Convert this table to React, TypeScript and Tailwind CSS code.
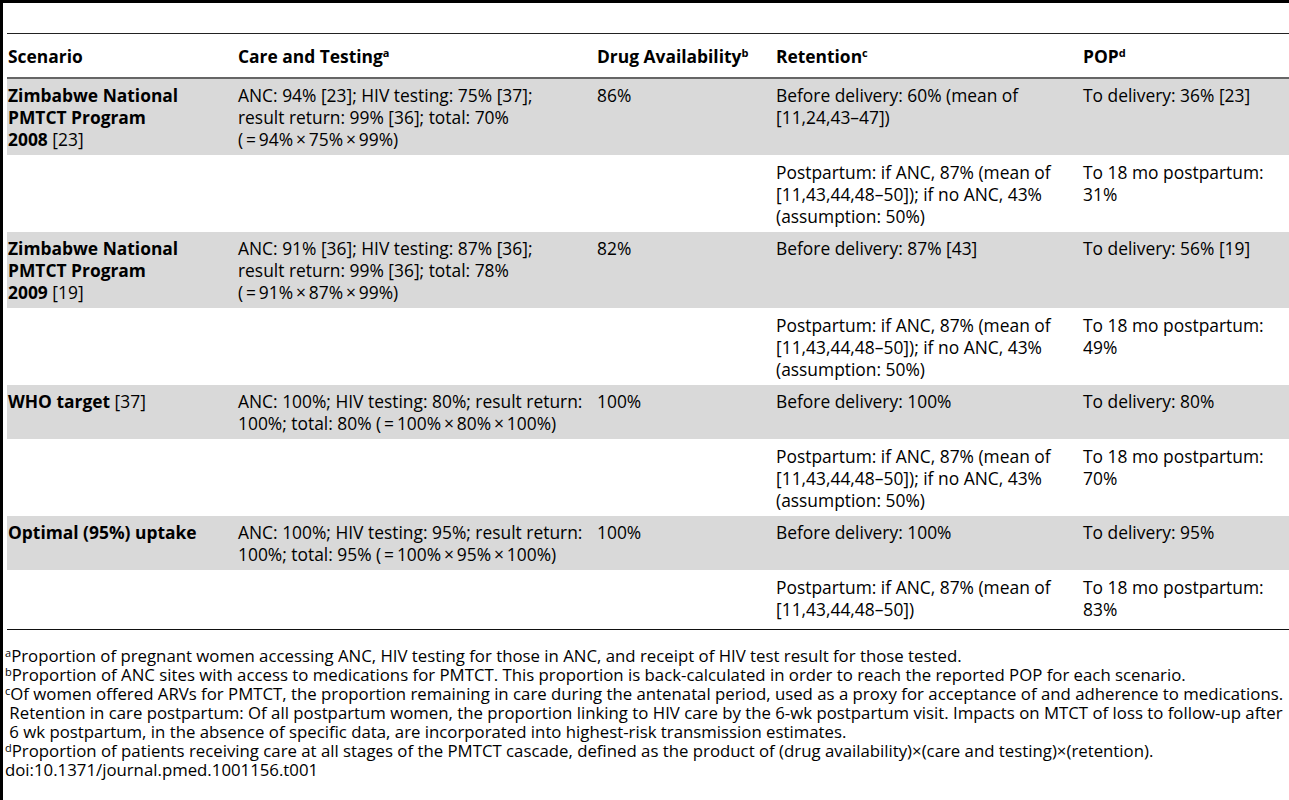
import React from "react";

type Row = {
  scenario?: React.ReactNode;
  care?: React.ReactNode;
  drug?: string;
  retention: React.ReactNode;
  pop: React.ReactNode;
  grey: boolean;
  tall?: boolean;
};

const t = "\u2009";
const mult = (a: string, b: string, c: string) => `(${t}=${t}${a}${t}×${t}${b}${t}×${t}${c})`;

const postpartum = (
  <>
    Postpartum: if ANC, 87% (mean of
    <br />
    [11,43,44,48–50]); if no ANC, 43%
    <br />
    (assumption: 50%)
  </>
);

const rows: Row[] = [
  {
    scenario: (
      <>
        <b>Zimbabwe National</b>
        <br />
        <b>PMTCT Program</b>
        <br />
        <b>2008</b> [23]
      </>
    ),
    care: (
      <>
        ANC: 94% [23]; HIV testing: 75% [37];
        <br />
        result return: 99% [36]; total: 70%
        <br />
        {mult("94%", "75%", "99%")}
      </>
    ),
    drug: "86%",
    retention: (
      <>
        Before delivery: 60% (mean of
        <br />
        [11,24,43–47])
      </>
    ),
    pop: "To delivery: 36% [23]",
    grey: true,
  },
  {
    retention: postpartum,
    pop: (
      <>
        To 18 mo postpartum:
        <br />
        31%
      </>
    ),
    grey: false,
  },
  {
    scenario: (
      <>
        <b>Zimbabwe National</b>
        <br />
        <b>PMTCT Program</b>
        <br />
        <b>2009</b> [19]
      </>
    ),
    care: (
      <>
        ANC: 91% [36]; HIV testing: 87% [36];
        <br />
        result return: 99% [36]; total: 78%
        <br />
        {mult("91%", "87%", "99%")}
      </>
    ),
    drug: "82%",
    retention: "Before delivery: 87% [43]",
    pop: "To delivery: 56% [19]",
    grey: true,
  },
  {
    retention: postpartum,
    pop: (
      <>
        To 18 mo postpartum:
        <br />
        49%
      </>
    ),
    grey: false,
  },
  {
    scenario: (
      <>
        <b>WHO target</b> [37]
      </>
    ),
    care: (
      <>
        ANC: 100%; HIV testing: 80%; result return:
        <br />
        100%; total: 80% {mult("100%", "80%", "100%")}
      </>
    ),
    drug: "100%",
    retention: "Before delivery: 100%",
    pop: "To delivery: 80%",
    grey: true,
  },
  {
    retention: postpartum,
    pop: (
      <>
        To 18 mo postpartum:
        <br />
        70%
      </>
    ),
    grey: false,
  },
  {
    scenario: <b>Optimal (95%) uptake</b>,
    care: (
      <>
        ANC: 100%; HIV testing: 95%; result return:
        <br />
        100%; total: 95% {mult("100%", "95%", "100%")}
      </>
    ),
    drug: "100%",
    retention: "Before delivery: 100%",
    pop: "To delivery: 95%",
    grey: true,
  },
  {
    retention: (
      <>
        Postpartum: if ANC, 87% (mean of
        <br />
        [11,43,44,48–50])
      </>
    ),
    pop: (
      <>
        To 18 mo postpartum:
        <br />
        83%
      </>
    ),
    grey: false,
    tall: true,
  },
];

const Sup = ({ children }: { children: string }) => <sup className="text-[11px] font-normal">{children}</sup>;
const HSup = ({ children }: { children: string }) => <sup className="text-[11px] font-bold">{children}</sup>;

const App = () => {
  return (
    <div className="w-[1289px] h-[800px] overflow-hidden bg-white border-l-[3px] border-t-[3px] border-black font-['Open_Sans',sans-serif] text-[17.4px] text-black">
      <div className="pl-[4px] pt-[30px]">
        <div className="border-t border-[#222]">
          <table className="w-full border-collapse table-fixed leading-[22px] whitespace-nowrap">
            <colgroup>
              <col className="w-[231px]" />
              <col className="w-[359px]" />
              <col className="w-[179px]" />
              <col className="w-[307px]" />
              <col />
            </colgroup>
            <thead>
              <tr className="h-[44px] border-b-2 border-[#666] text-left">
                <th className="pl-[1px] pt-[1px] font-bold">Scenario</th>
                <th className="font-bold">
                  Care and Testing<HSup>a</HSup>
                </th>
                <th className="font-bold">
                  Drug Availability<HSup>b</HSup>
                </th>
                <th className="font-bold">
                  Retention<HSup>c</HSup>
                </th>
                <th className="font-bold">
                  POP<HSup>d</HSup>
                </th>
              </tr>
            </thead>
            <tbody>
              {rows.map((r, i) => (
                <tr key={i} className={r.grey ? "bg-[#d9d9d9] border-b border-white" : "bg-white"}>
                  <td className="align-top pl-[1px] pt-[5px] pb-[5px]">{r.scenario}</td>
                  <td className="align-top pt-[5px] pb-[5px]">{r.care}</td>
                  <td className="align-top pt-[5px] pb-[5px]">{r.drug}</td>
                  <td className="align-top pt-[5px] pb-[5px]">{r.retention}</td>
                  <td className={`align-top pt-[5px] ${r.tall ? "pb-[9px]" : "pb-[5px]"}`}>{r.pop}</td>
                </tr>
              ))}
            </tbody>
          </table>
          <div className="border-t border-[#111]" />
        </div>
      </div>
      <div className="pl-[2px] pt-[16px] text-[16.8px] leading-[19px] whitespace-nowrap">
        <div>
          <Sup>a</Sup>Proportion of pregnant women accessing ANC, HIV testing for those in ANC, and receipt of HIV test result for those tested.
        </div>
        <div>
          <Sup>b</Sup>Proportion of ANC sites with access to medications for PMTCT. This proportion is back-calculated in order to reach the reported POP for each scenario.
        </div>
        <div>
          <Sup>c</Sup>Of women offered ARVs for PMTCT, the proportion remaining in care during the antenatal period, used as a proxy for acceptance of and adherence to medications.
          <br />
          &nbsp;Retention in care postpartum: Of all postpartum women, the proportion linking to HIV care by the 6-wk postpartum visit. Impacts on MTCT of loss to follow-up after
          <br />
          &nbsp;6 wk postpartum, in the absence of specific data, are incorporated into highest-risk transmission estimates.
        </div>
        <div>
          <Sup>d</Sup>Proportion of patients receiving care at all stages of the PMTCT cascade, defined as the product of (drug availability)×(care and testing)×(retention).
        </div>
        <div>doi:10.1371/journal.pmed.1001156.t001</div>
      </div>
    </div>
  );
};

export default App;
